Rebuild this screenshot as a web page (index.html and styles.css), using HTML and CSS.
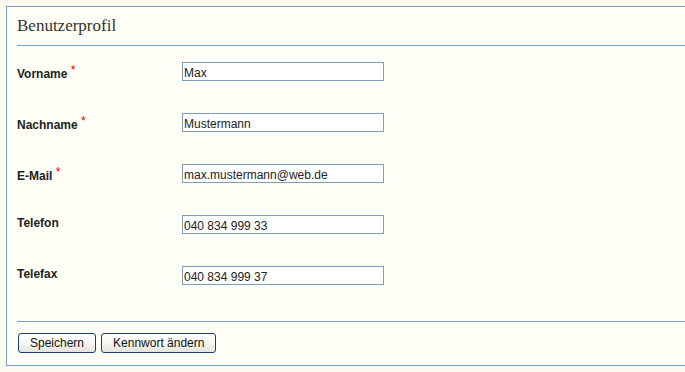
FILE: index.html
```html
<!DOCTYPE html>
<html lang="de">
<head>
<meta charset="utf-8">
<title>Benutzerprofil</title>
<link rel="stylesheet" href="styles.css">
</head>
<body>
<div class="panel">
  <div class="panel-header">
    <h1 class="panel-title">Benutzerprofil</h1>
  </div>
  <form class="profile-form">
    <div class="form-row">
      <label class="field-label" for="vorname">Vorname <span class="req">*</span></label>
      <input class="field-input" id="vorname" type="text" value="Max">
    </div>
    <div class="form-row">
      <label class="field-label" for="nachname">Nachname <span class="req">*</span></label>
      <input class="field-input" id="nachname" type="text" value="Mustermann">
    </div>
    <div class="form-row">
      <label class="field-label" for="email">E-Mail <span class="req">*</span></label>
      <input class="field-input" id="email" type="text" value="max.mustermann@web.de">
    </div>
    <div class="form-row">
      <label class="field-label" for="telefon">Telefon</label>
      <input class="field-input" id="telefon" type="text" value="040 834 999 33">
    </div>
    <div class="form-row">
      <label class="field-label" for="telefax">Telefax</label>
      <input class="field-input" id="telefax" type="text" value="040 834 999 37">
    </div>
  </form>
  <div class="panel-footer">
    <button class="btn" type="button">Speichern</button>
    <button class="btn" type="button">Kennwort ändern</button>
  </div>
</div>
</body>
</html>
```
FILE: styles.css
```css
body {
  margin: 0;
  background: #fcf9ee;
  font-family: "Liberation Sans", Arial, sans-serif;
  font-size: 12px;
  color: #222;
}
.panel {
  margin: 6px 0 0 6px;
  background: #fffff7;
  border: 1px solid #7d9ec4;
  border-right: none;
}
.panel-header {
  margin-left: 10px;
  padding: 9px 0 9px;
  border-bottom: 1px solid #7d9ec4;
}
.panel-title {
  margin: 0;
  font-family: "Liberation Serif", "Times New Roman", serif;
  font-weight: normal;
  font-size: 17px;
  line-height: 20px;
  color: #333;
}
.profile-form {
  margin: 0 0 0 10px;
  padding: 16px 0 36px;
  display: grid;
  row-gap: 32px;
}
.form-row {
  display: grid;
  grid-template-columns: 165px 202px;
  align-items: start;
  height: 19px;
}
.field-label {
  font-weight: bold;
  font-size: 12px;
  line-height: normal;
  padding-top: 1px;
  color: #222;
}
.req {
  font-weight: normal;
  color: #e00000;
  vertical-align: 4px;
  line-height: normal;
}
.field-input {
  box-sizing: border-box;
  width: 202px;
  height: 19px;
  margin: 0;
  padding: 2px 1px 0;
  border: 1px solid #7f9db9;
  background: #fff;
  font-family: "Liberation Sans", Arial, sans-serif;
  font-size: 12px;
  line-height: 14px;
  color: #222;
  outline: none;
}
.panel-footer {
  margin-left: 10px;
  padding: 11px 0 12px 1px;
  border-top: 1px solid #7d9ec4;
  display: flex;
  gap: 5px;
}
.btn {
  box-sizing: border-box;
  height: 20px;
  margin: 0;
  padding: 0 11px;
  border: 1px solid #1c3f6e;
  border-radius: 3px;
  background: linear-gradient(#ffffff 0%, #f6f6f2 50%, #e4e4dc 100%);
  font-family: "Liberation Sans", Arial, sans-serif;
  font-size: 12px;
  line-height: 16px;
  color: #111;
}
```
